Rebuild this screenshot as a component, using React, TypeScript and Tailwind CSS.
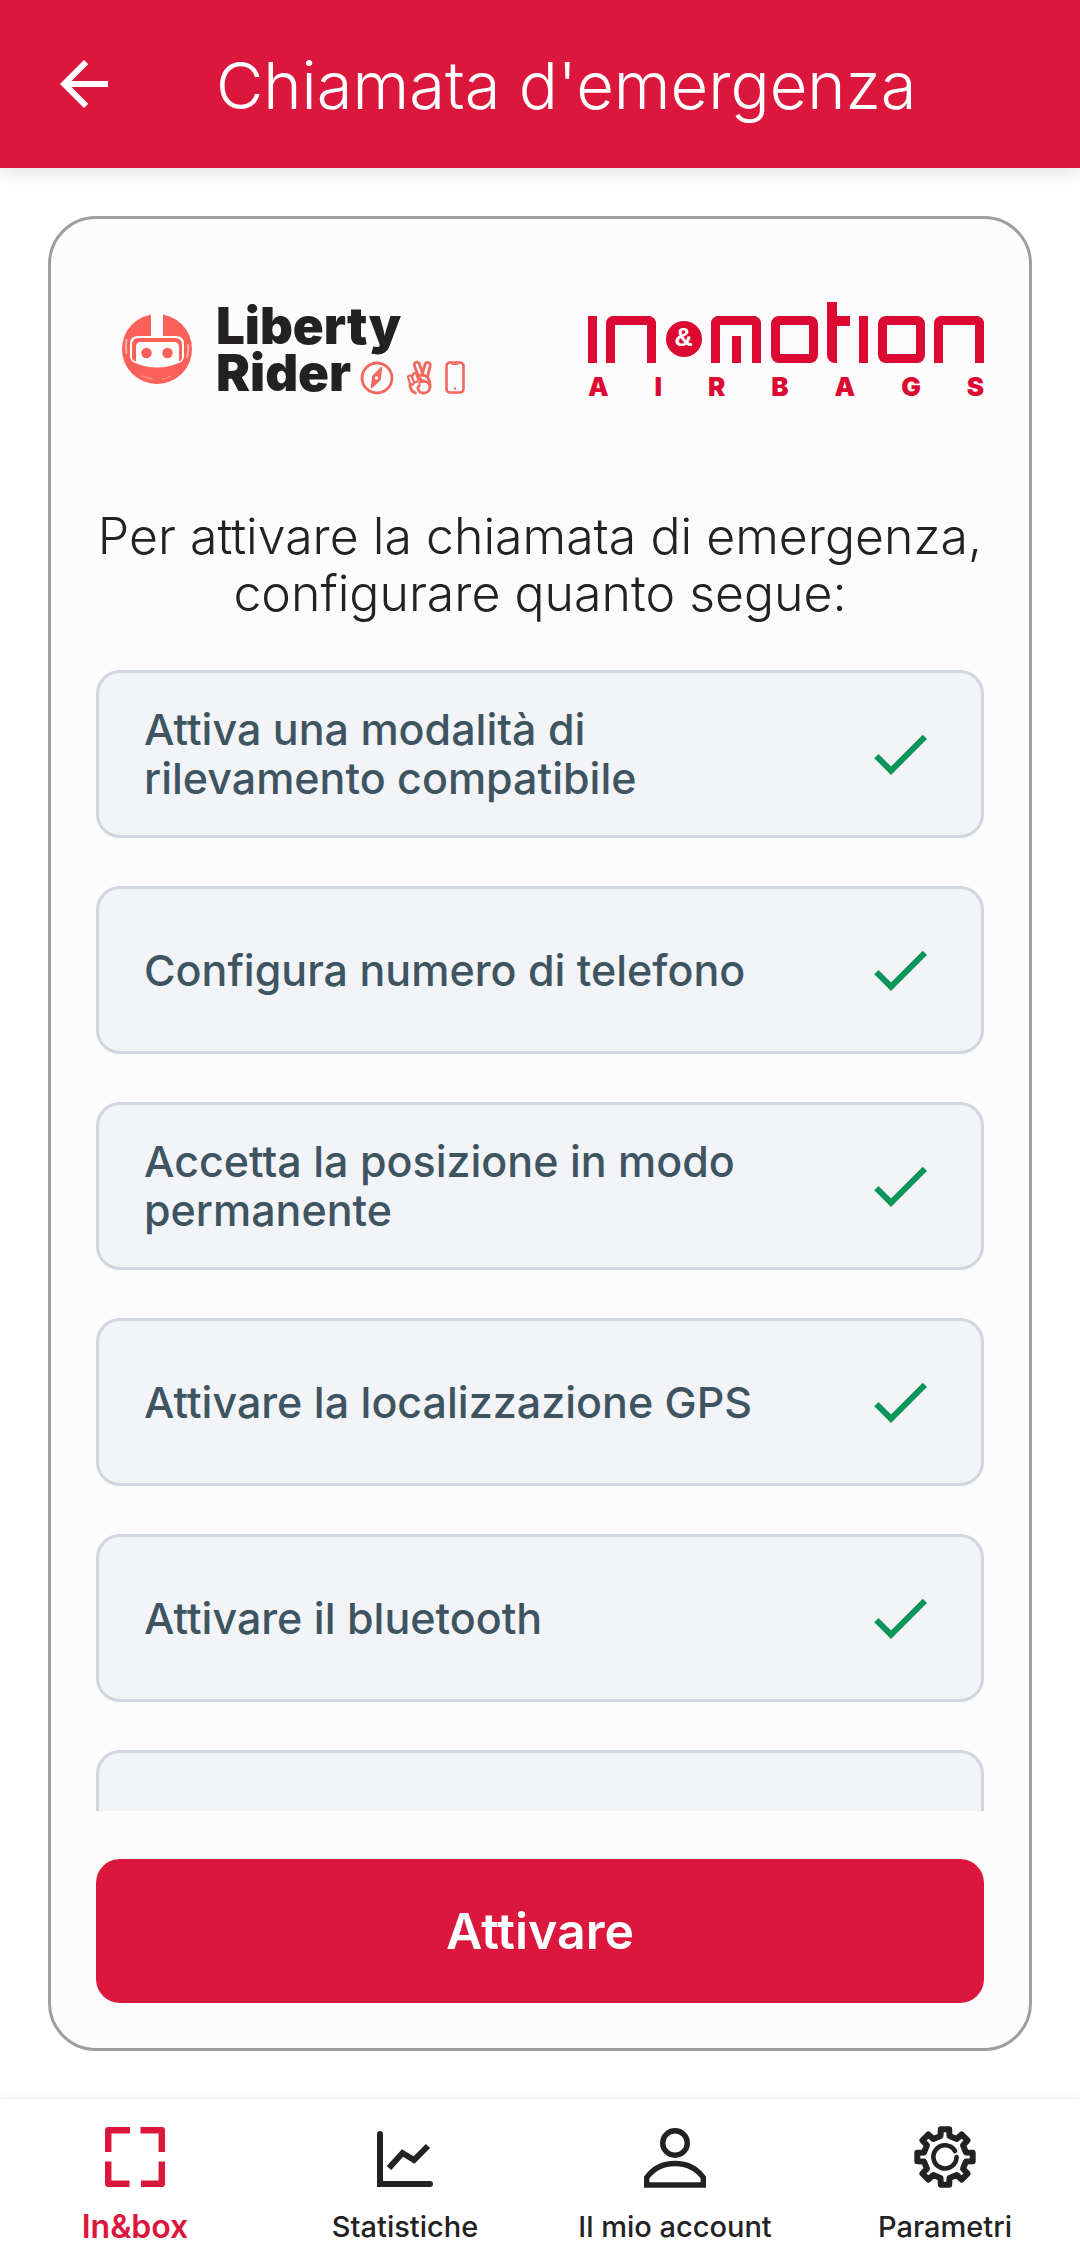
import React from "react";

const steps = [
  "Attiva una modalità di rilevamento compatibile",
  "Configura numero di telefono",
  "Accetta la posizione in modo permanente",
  "Attivare la localizzazione GPS",
  "Attivare il bluetooth",
  "",
];

function ArrowBack() {
  return (
    <svg viewBox="0 0 24 24" className="size-[72px]" fill="currentColor" aria-hidden="true">
      <path d="M20 11H7.83l5.59-5.59L12 4l-8 8 8 8 1.41-1.41L7.83 13H20v-2z" />
    </svg>
  );
}

function Check() {
  return (
    <svg viewBox="0 0 24 24" className="size-[72px] shrink-0" fill="#0b9558" aria-hidden="true">
      <path d="M9 16.17 4.83 12l-1.42 1.41L9 19 21 7l-1.41-1.41z" />
    </svg>
  );
}

function Helmet() {
  return (
    <svg viewBox="0 0 70 70" className="size-[70px] shrink-0" aria-hidden="true">
      <circle cx="35" cy="35" r="35" fill="#fb6059" />
      <rect x="29" y="-1" width="12" height="25" fill="#fcfcfc" />
      <path d="M16 22h38q8 0 8 8v12q0 4-4 6.500-23 10-46 0-4-2.500-4-6.500V30q0-8 8-8Z" fill="#fcfcfc" />
      <path d="M10 44V31q0-7 7-7h36q7 0 7 7v13q0 2-3 3.500V33q0-5-5-5H19q-5 0-5 5v14.500Q10 46 10 44Z" fill="#fb6059" />
      <circle cx="24.500" cy="39" r="5.200" fill="#fb6059" />
      <circle cx="45.500" cy="39" r="5.200" fill="#fb6059" />
      <path d="M4.500 26q-1.500 6 0 13M66 31q1 5-1 12" fill="none" stroke="#fdb0ab" strokeWidth="2" strokeLinecap="round" />
      <path d="M20 62q6 3 11 3M41 65q5-1 8-3" fill="none" stroke="#fc8a84" strokeWidth="1.500" strokeLinecap="round" />
    </svg>
  );
}

function LibertyIcons() {
  return (
    <svg viewBox="0 0 108 36" className="h-[36px] w-[108px] shrink-0" fill="none" stroke="#f4675f" strokeWidth="2.800" strokeLinecap="round" strokeLinejoin="round" aria-hidden="true">
      <circle cx="18" cy="18" r="15" />
      <path d="M22.500 7.500 14 16l-1.500 11.500L21 20Z" fill="#f4675f" strokeWidth="1.500" />
      <circle cx="17.500" cy="18" r="1.800" fill="#fcfcfc" stroke="none" />
      <path d="M59 15 55.500 6q-.8-3.200 1.800-3.800 2.400-.5 3.200 2L63.500 13 66 4.500q.8-2.600 3.200-2 2.600.7 1.900 3.600L68.500 17q2.800 4 2.500 9.500" />
      <path d="M66 21.500q-4.500-1-5.500-4-1-2.500 2-2.500 4 0 6 2.500M60.500 22.500q2-1.500 5.500-1 5 1 5 5.500-.5 6-6.500 6-4.500-.2-5.500-4-.4-2.500 1.500-3.500" />
      <path d="m49 17 2 6.500q1.500 2 3.500.5.800-1 .3-2.500l-2-5q-1-1.500-2.500-.8-1.500.5-1.300 1.300ZM54 15.500q-.5-2 1.500-2.500 1.500 0 2 1.500l2 5.500q-1.500 2.500-4 2.500" strokeWidth="2.200" />
      <path d="M51 24.500q0 6.500 5.500 8.500" />
      <rect x="87.500" y="2.500" width="17" height="30" rx="3.500" strokeWidth="2.600" />
      <path d="M93 4.500h6" strokeWidth="1.200" />
      <circle cx="96" cy="28.500" r="1.200" fill="#f4675f" stroke="none" />
    </svg>
  );
}

function LibertyRiderLogo() {
  return (
    <div className="flex items-center pl-[26px]">
      <Helmet />
      <div className="ml-6 flex flex-col text-[51px] leading-[47px] font-black text-[#232122]">
        <span>Liberty</span>
        <div className="flex items-end">
          <span>Rider</span>
          <span className="ml-2">
            <LibertyIcons />
          </span>
        </div>
      </div>
    </div>
  );
}

function InMotionLogo() {
  return (
    <div className="flex w-[396px] flex-col text-[#dc0a32]">
      <div role="img" aria-label="In&motion" className="flex items-end justify-between">
        <span className="h-[47px] w-[9px] bg-current" />
        <span className="h-[47px] w-[50px] rounded-t-lg border-x-9 border-t-9 border-current" />
        <span className="mb-[6px] flex size-9 items-center justify-center rounded-full bg-current">
          <span className="font-['Liberation_Mono'] text-[28px] leading-none font-bold text-white">&amp;</span>
        </span>
        <span className="flex h-[47px] w-[50px] items-end justify-center rounded-t-lg border-x-9 border-t-9 border-current">
          <span className="h-[27px] w-[9px] bg-current" />
        </span>
        <span className="h-[47px] w-[47px] rounded-lg border-9 border-current" />
        <span className="flex h-[61px] w-[23px]">
          <span className="w-[10px] rounded-bl-lg bg-current" />
          <span className="mt-[14px] h-[10px] flex-1 bg-current" />
        </span>
        <span className="h-[47px] w-[9px] bg-current" />
        <span className="h-[47px] w-[47px] rounded-lg border-9 border-current" />
        <span className="h-[47px] w-[50px] rounded-t-lg border-x-9 border-t-9 border-current" />
      </div>
      <p aria-label="Airbags" className="mt-3 flex justify-between text-[26px] leading-[24px] font-black">
        {"AIRBAGS".split("").map((letter, i) => (
          <span key={i}>{letter}</span>
        ))}
      </p>
    </div>
  );
}

function BoxIcon() {
  return (
    <svg viewBox="0 0 60 60" className="size-[60px]" fill="none" stroke="currentColor" strokeWidth="6.500" strokeLinejoin="round" aria-hidden="true">
      <path d="M25 3.200H3.200V25M35.500 3.200h21.300V25M56.800 34.500v22.300H36M3.200 34.500v22.300H24.500" />
    </svg>
  );
}

function ChartIcon() {
  return (
    <svg viewBox="0 0 60 60" className="size-[60px]" fill="none" stroke="currentColor" strokeWidth="6" aria-hidden="true">
      <path d="M5 7v52" />
      <path d="M2 57h53" />
      <circle cx="5" cy="7" r="3" fill="currentColor" stroke="none" />
      <circle cx="55" cy="57" r="3" fill="currentColor" stroke="none" />
      <path d="M14 41 27.500 26 39 33 53 19" />
    </svg>
  );
}

function PersonIcon() {
  return (
    <svg viewBox="0 0 62 62" className="size-[62px]" fill="none" stroke="currentColor" strokeWidth="5.400" aria-hidden="true">
      <circle cx="31" cy="17" r="12.300" />
      <path d="M2.700 59V51.500Q13 37.500 31 37.500T59.300 51.500V59Z" />
    </svg>
  );
}

const gearOutline = (() => {
  const point = (r: number, a: number) => `${(31 + r * Math.cos(a)).toFixed(2)} ${(31 + r * Math.sin(a)).toFixed(2)}`;
  const parts: string[] = [];
  for (let k = 0; k < 8; k++) {
    const a = (k * Math.PI) / 4;
    parts.push(point(21.5, a - 0.21), point(28, a - 0.15), point(28, a + 0.15), point(21.5, a + 0.21));
  }
  return `M${parts.join("L")}Z`;
})();

function GearIcon() {
  return (
    <svg viewBox="0 0 62 62" className="size-[62px]" fill="none" stroke="currentColor" strokeLinejoin="round" strokeLinecap="round" aria-hidden="true">
      <path d={gearOutline} strokeWidth="6" />
      <path d="M41 25A11.600 11.600 0 1 0 42.600 31" strokeWidth="4.600" />
    </svg>
  );
}

const tabs = [
  { label: "In&box", icon: <BoxIcon />, active: true },
  { label: "Statistiche", icon: <ChartIcon />, active: false },
  { label: "Il mio account", icon: <PersonIcon />, active: false },
  { label: "Parametri", icon: <GearIcon />, active: false },
];

export default function App() {
  return (
    <div className="flex h-screen flex-col bg-white font-[Inter,sans-serif]">
      <header className="z-10 flex h-42 shrink-0 items-center bg-[#dc173d] px-12 text-white shadow-[0_4px_18px_rgba(0,0,0,0.12)]">
        <button type="button" aria-label="Indietro">
          <ArrowBack />
        </button>
        <h1 className="ml-24 pt-1 text-[65px] leading-[72px] font-light">Chiamata d'emergenza</h1>
      </header>

      <main className="flex min-h-0 flex-1 flex-col p-12">
        <section className="flex min-h-0 flex-1 flex-col rounded-[48px] border-3 border-[#9e9e9e] bg-[#fcfcfc] p-[45px]">
          <div className="mt-[38px] flex items-start justify-between">
            <LibertyRiderLogo />
            <InMotionLogo />
          </div>

          <p className="mt-[109px] text-center text-[50px] leading-[57px] font-light text-[#222222]">
            Per attivare la chiamata di emergenza, configurare quanto segue:
          </p>

          <ul className="mt-12 flex min-h-0 flex-1 flex-col gap-12 overflow-y-auto [scrollbar-width:none]">
            {steps.map((step, i) => (
              <li key={i} className="flex h-42 shrink-0 items-center justify-between rounded-3xl border-3 border-[#d0d5de] bg-[#f3f4f8] px-[45px]">
                <span className="max-w-[640px] text-[43px] leading-[49px] font-medium text-[#3e5561]">{step}</span>
                <Check />
              </li>
            ))}
          </ul>

          <button type="button" className="mt-12 h-36 shrink-0 rounded-3xl bg-[#dc173d] text-[50px] font-semibold text-white">
            Attivare
          </button>
        </section>
      </main>

      <nav className="grid h-42 shrink-0 grid-cols-4 bg-white shadow-[0_0_10px_rgba(0,0,0,0.10)]">
        {tabs.map((tab) => (
          <a
            key={tab.label}
            href="#"
            aria-current={tab.active ? "page" : undefined}
            className={
              tab.active
                ? "flex flex-col items-center pt-[26px] text-[32px] font-semibold text-[#dc173d]"
                : "flex flex-col items-center pt-[26px] text-[29px] font-medium text-[#222222]"
            }
          >
            <span className="flex h-16 items-center">{tab.icon}</span>
            <span className="mt-4 leading-[44px]">{tab.label}</span>
          </a>
        ))}
      </nav>
    </div>
  );
}
